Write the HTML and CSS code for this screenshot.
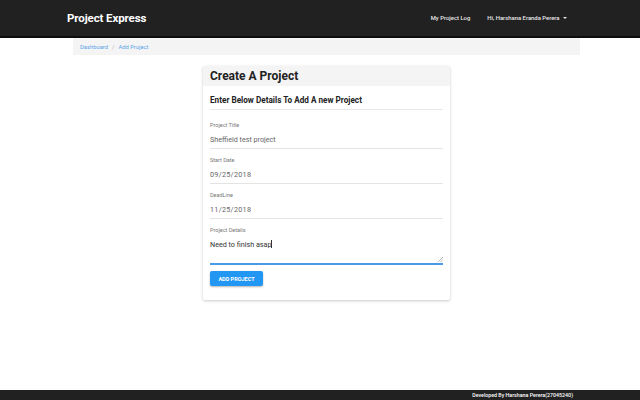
FILE: index.html
```html
<!DOCTYPE html>
<html>
<head>
<meta charset="utf-8">
<link rel="stylesheet" href="styles.css">
</head>
<body>
<div class="page">
  <header class="navbar">
    <div class="nav-inner">
      <a class="brand">Project Express</a>
      <nav class="nav-links">
        <a class="nav-link">My Project Log</a>
        <a class="nav-link">Hi, Harshana Eranda Perera <span class="caret"></span></a>
      </nav>
    </div>
  </header>
  <main class="main">
    <div class="breadcrumb">
      <a class="crumb">Dashboard</a>
      <span class="sep">/</span>
      <a class="crumb">Add Project</a>
    </div>
    <div class="card">
      <div class="card-header">Create A Project</div>
      <div class="card-body">
        <h2 class="subtitle">Enter Below Details To Add A new Project</h2>
        <div class="field first">
          <label class="label">Project Title</label>
          <div class="value">Sheffield test project</div>
        </div>
        <div class="field">
          <label class="label">Start Date</label>
          <div class="value date">09/25/2018</div>
        </div>
        <div class="field">
          <label class="label">DeadLine</label>
          <div class="value date">11/25/2018</div>
        </div>
        <div class="field">
          <label class="label">Project Details</label>
          <div class="value textarea">Need to finish asap<span class="cursor"></span>
            <svg class="grip" width="5" height="5" viewBox="0 0 5 5"><path d="M5 0L0 5M5 2.5L2.5 5" stroke="#999" stroke-width="0.7"/></svg>
          </div>
        </div>
        <button class="btn">ADD PROJECT</button>
      </div>
    </div>
  </main>
  <footer class="footer">
    <div class="footer-inner">Developed By Harshana Perera(27045240)</div>
  </footer>
</div>
</body>
</html>
```

FILE: styles.css
```css
* { box-sizing: border-box; }
html, body { margin: 0; padding: 0; }
body {
  font-family: Roboto, "Liberation Sans", sans-serif;
  background: #fff;
  color: #333;
}
.page {
  min-height: 400px;
  display: flex;
  flex-direction: column;
}
.navbar {
  background: #212121;
  border-bottom: 2px solid #0d0d0d;
  height: 38px;
}
.nav-inner {
  width: 506px;
  margin: 0 auto;
  height: 36px;
  display: flex;
  align-items: center;
  justify-content: space-between;
}
.brand {
  color: #fff;
  font-weight: 700;
  font-size: 11.5px;
  letter-spacing: -0.1px;
}
.nav-links {
  display: flex;
  gap: 17px;
  padding-right: 6px;
}
.nav-link {
  color: #e8e8e8;
  font-size: 5.9px;
  font-weight: 500;
}
.caret {
  display: inline-block;
  width: 0; height: 0;
  border-left: 2px solid transparent;
  border-right: 2px solid transparent;
  border-top: 2.5px solid #e8e8e8;
  vertical-align: middle;
  margin-left: 2px;
}
.main {
  flex: 1;
  width: 507px;
  margin-left: 73px;
  display: flex;
  flex-direction: column;
  align-items: center;
}
.breadcrumb {
  align-self: stretch;
  background: #f4f4f4;
  height: 17px;
  display: flex;
  align-items: center;
  padding-left: 7px;
  gap: 4px;
  font-size: 5.8px;
}
.crumb { color: #5aa3e8; }
.sep { color: #b5b5b5; }
.card {
  margin-top: 11px;
  width: 247px;
  background: #fff;
  box-shadow: 0 1px 3px rgba(0,0,0,0.22);
  border-radius: 2px;
}
.card-header {
  background: #f4f4f4;
  height: 20px;
  padding-left: 7px;
  display: flex;
  align-items: center;
  font-size: 12px;
  font-weight: 700;
  color: #222;
}
.card-body {
  padding: 0 7px 14px 7px;
}
.subtitle {
  margin: 0;
  font-size: 8.2px;
  font-weight: 700;
  color: #222;
  padding: 9px 0 4px;
  border-bottom: 1px solid #e8e8e8;
}
.field {
  display: flex;
  flex-direction: column;
}
.label {
  font-size: 5.5px;
  color: #777;
  margin-top: 8px;
  line-height: 7px;
}
.field.first .label { margin-top: 12px; }
.value {
  font-size: 7.2px;
  line-height: 10px;
  color: #666;
  border-bottom: 1px solid #e4e4e4;
  height: 20px;
  padding-top: 6px;
}
.value.date { letter-spacing: 0.3px; }
.textarea {
  position: relative;
  height: 31px;
  color: #333;
  padding-top: 6px;
  border-bottom: 2px solid #4a9be6;
}
.cursor {
  display: inline-block;
  width: 0.7px;
  height: 8px;
  background: #333;
  vertical-align: -1px;
}
.grip {
  position: absolute;
  right: 0;
  bottom: 1px;
}
.btn {
  display: block;
  margin-top: 6px;
  background: #2196f3;
  color: #fff;
  border: none;
  border-radius: 2px;
  height: 15px;
  width: 53px;
  padding: 0;
  font-family: Roboto, "Liberation Sans", sans-serif;
  font-size: 5.5px;
  font-weight: 700;
  box-shadow: 0 1px 2px rgba(0,0,0,0.3);
}
.footer {
  background: #212121;
  height: 10px;
  margin-top: auto;
}
.footer-inner {
  width: 506px;
  margin: 0 auto;
  text-align: right;
  color: #fff;
  font-size: 5.3px;
  line-height: 10px;
  font-weight: 500;
}
```
